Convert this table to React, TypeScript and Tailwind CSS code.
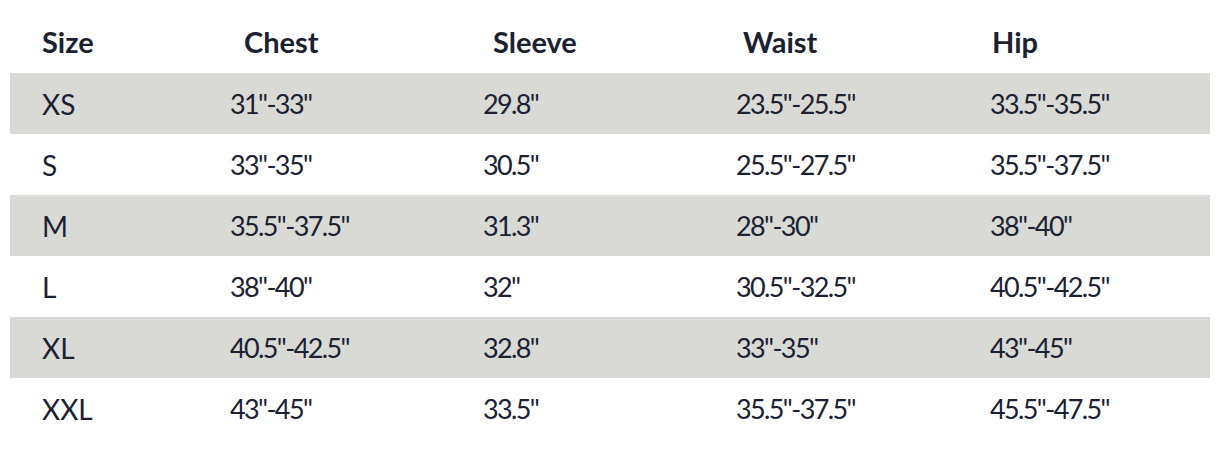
const headers = [
  { label: "Size", className: "pl-8" },
  { label: "Chest", className: "pl-[14px]" },
  { label: "Sleeve", className: "pl-[10px]" },
  { label: "Waist", className: "pl-[7px]" },
  { label: "Hip", className: "pl-[2px]" },
];

const rows = [
  ["XS", '31"-33"', '29.8"', '23.5"-25.5"', '33.5"-35.5"'],
  ["S", '33"-35"', '30.5"', '25.5"-27.5"', '35.5"-37.5"'],
  ["M", '35.5"-37.5"', '31.3"', '28"-30"', '38"-40"'],
  ["L", '38"-40"', '32"', '30.5"-32.5"', '40.5"-42.5"'],
  ["XL", '40.5"-42.5"', '32.8"', '33"-35"', '43"-45"'],
  ["XXL", '43"-45"', '33.5"', '35.5"-37.5"', '45.5"-47.5"'],
];

const cols = "grid grid-cols-[220px_253px_253px_254px_220px]";

export default function App() {
  return (
    <div
      className="w-[1228px] h-[464px] bg-white text-[#1b2131]"
      style={{ fontFamily: "Lato, 'Noto Sans', sans-serif" }}
    >
      <div className="ml-[10px] w-[1200px]">
        <div className={`${cols} h-[73px] pt-[22px] text-[29px] font-bold leading-[40px]`}>
          {headers.map((h) => (
            <div key={h.label} className={h.className}>
              {h.label}
            </div>
          ))}
        </div>
        {rows.map((row, i) => (
          <div
            key={row[0]}
            className={`${cols} h-[61px] items-center ${i % 2 === 0 ? "bg-[#d9dad6]" : ""}`}
          >
            <div className="pl-8 text-[28px] leading-none">{row[0]}</div>
            {row.slice(1).map((cell, j) => (
              <div key={j} className="text-[27px] leading-none tracking-[-0.06em]">
                {cell}
              </div>
            ))}
          </div>
        ))}
      </div>
    </div>
  );
}
